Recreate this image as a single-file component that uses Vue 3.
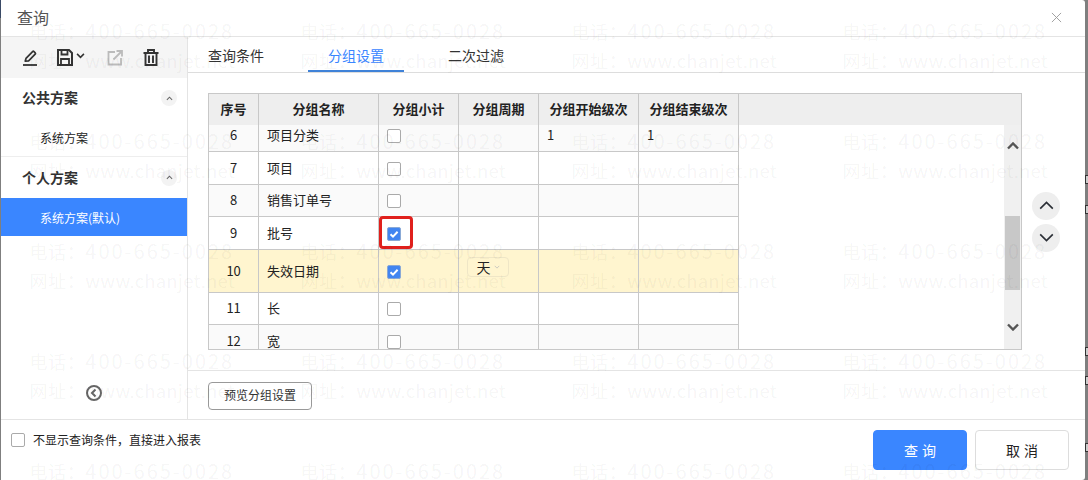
<script setup>
const rows = [
  { no: 6, name: '项目分类', h: 32, alt: true, start: '1', end: '1' },
  { no: 7, name: '项目', h: 33 },
  { no: 8, name: '销售订单号', h: 32, alt: true },
  { no: 9, name: '批号', h: 33, checked: true, mark: true },
  { no: 10, name: '失效日期', h: 43, checked: true, hot: true, period: '天' },
  { no: 11, name: '长', h: 32 },
  { no: 12, name: '宽', h: 32, alt: true },
]
const heads = ['序号', '分组名称', '分组小计', '分组周期', '分组开始级次', '分组结束级次']
const tabs = ['查询条件', '分组设置', '二次过滤']
const marks = [175, 205, 347, 376, 443]
const waterCells = Array.from({ length: 20 }, (_, i) => i)
const telLabel = '电话\uFF1A'
const webLabel = '网址\uFF1A'
const skipText = '不显示查询条件\uFF0C直接进入报表'
</script>

<template>
  <div class="stage">
    <div class="modal">
      <header class="head">
        <span class="title">查询</span>
        <svg class="close" viewBox="0 0 12 12" width="11" height="11"><path d="M1 1l10 10M11 1L1 11" fill="none" stroke="#999" stroke-width="1" /></svg>
      </header>

      <div class="body">
        <aside class="side">
          <div class="tools">
            <svg class="tool t-edit" viewBox="0 0 16 18" width="16" height="18">
              <path d="M3.2 12.2 4 9.4 10.6 2.6a1 1 0 0 1 1.4 0l1.2 1.2a1 1 0 0 1 0 1.4L6.6 11.8Z" fill="none" stroke="#333" stroke-width="1.7" stroke-linejoin="round" />
              <path d="M1 16h14" stroke="#333" stroke-width="1.8" />
            </svg>
            <span class="save">
              <svg viewBox="0 0 16 17" width="16" height="17">
                <path d="M1 1h11l3 3v12H1Z" fill="none" stroke="#333" stroke-width="2" />
                <path d="M4.5 1.5v4h6v-4M4 16v-6h8v6" fill="none" stroke="#333" stroke-width="1.8" />
              </svg>
              <svg viewBox="0 0 10 7" width="9" height="6"><path d="M1 1l4 4 4-4" fill="none" stroke="#333" stroke-width="1.8" /></svg>
            </span>
            <svg class="tool t-export" viewBox="0 0 16 16" width="16" height="16">
              <path d="M8 2H1.5v12.5H14V8" fill="none" stroke="#bbb" stroke-width="1.8" />
              <path d="M6.5 9.5 14.5 1.5M9.5 1h5.5v5.5" fill="none" stroke="#bbb" stroke-width="1.8" />
            </svg>
            <svg class="tool t-trash" viewBox="0 0 16 17" width="16" height="17">
              <path d="M0.5 4h15M5 4V1h6v3" fill="none" stroke="#333" stroke-width="1.9" />
              <path d="M2.5 4v12h11V4M6 6.5V14M10 6.5V14" fill="none" stroke="#333" stroke-width="1.9" />
            </svg>
          </div>

          <div class="group-head">
            <span>公共方案</span>
            <i class="fold"><svg viewBox="0 0 8 5" width="7" height="5"><path d="M1 4l3-3 3 3" fill="none" stroke="#666" stroke-width="1.2" /></svg></i>
          </div>
          <div class="plan">系统方案</div>
          <div class="group-head second">
            <span>个人方案</span>
            <i class="fold"><svg viewBox="0 0 8 5" width="7" height="5"><path d="M1 4l3-3 3 3" fill="none" stroke="#666" stroke-width="1.2" /></svg></i>
          </div>
          <div class="plan active">系统方案(默认)</div>

          <svg class="collapse" viewBox="0 0 16 16" width="16" height="16">
            <circle cx="8" cy="8" r="7" fill="none" stroke="#666" stroke-width="2" />
            <path d="M9.5 4.5 6 8l3.5 3.5" fill="none" stroke="#666" stroke-width="2" />
          </svg>
        </aside>

        <main class="main">
          <nav class="tabs">
            <span v-for="(t, i) in tabs" :key="t" class="tab" :class="{ on: i === 1 }">{{ t }}</span>
          </nav>

          <div class="work">
            <div class="grid-box">
              <div class="grid-head">
                <span v-for="h in heads" :key="h" class="hcell">{{ h }}</span>
              </div>
              <div class="grid-view">
                <div class="grid-scroll">
                  <div
                    v-for="r in rows"
                    :key="r.no"
                    class="row"
                    :class="{ alt: r.alt, hot: r.hot }"
                    :style="{ height: r.h + 'px' }"
                  >
                    <span class="cell center">{{ r.no }}</span>
                    <span class="cell name">{{ r.name }}</span>
                    <span class="cell check-cell">
                      <i class="box" :class="{ checked: r.checked }">
                        <svg v-if="r.checked" viewBox="0 0 12 12" width="12" height="12"><path d="M2.5 6.2 5 8.6 9.6 3.8" fill="none" stroke="#fff" stroke-width="2" /></svg>
                      </i>
                      <b v-if="r.mark" class="redmark"></b>
                    </span>
                    <span class="cell period">
                      <span v-if="r.period" class="select">
                        {{ r.period }}
                        <svg viewBox="0 0 8 5" width="6" height="4"><path d="M1 1l3 3 3-3" fill="none" stroke="#bbb" stroke-width="1" /></svg>
                      </span>
                    </span>
                    <span class="cell num">{{ r.start }}</span>
                    <span class="cell num">{{ r.end }}</span>
                  </div>
                </div>
                <div class="scrollbar">
                  <svg viewBox="0 0 12 8" width="12" height="8"><path d="M1 6.5l5-5 5 5" fill="none" stroke="#555" stroke-width="2.4" /></svg>
                  <i class="thumb"></i>
                  <svg class="sb-down" viewBox="0 0 12 8" width="12" height="8"><path d="M1 1.5l5 5 5-5" fill="none" stroke="#555" stroke-width="2.4" /></svg>
                </div>
              </div>
            </div>
            <div class="movers">
              <button class="mover"><svg viewBox="0 0 16 10" width="15" height="9"><path d="M1 8.5l7-7 7 7" fill="none" stroke="#2b2f36" stroke-width="1.8" /></svg></button>
              <button class="mover"><svg viewBox="0 0 16 10" width="15" height="9"><path d="M1 1.5l7 7 7-7" fill="none" stroke="#2b2f36" stroke-width="1.8" /></svg></button>
            </div>
          </div>

          <div class="preview-bar">
            <button class="preview">预览分组设置</button>
          </div>
        </main>
      </div>

      <footer class="foot">
        <label class="skip"><i class="box"></i><span class="skip-text">{{ skipText }}</span></label>
        <div class="actions">
          <button class="btn primary">查询</button>
          <button class="btn">取消</button>
        </div>
      </footer>
    </div>

    <div class="watermark">
      <div v-for="c in waterCells" :key="c" class="wm">
        <span class="tel"><em>{{ telLabel }}</em>400-665-0028</span>
        <span class="web"><em>{{ webLabel }}</em>www.chanjet.net</span>
      </div>
    </div>

    <i v-for="m in marks" :key="m" class="edge-mark" :style="{ top: m + 'px' }"></i>
  </div>
</template>

<style>
html, body { margin: 0; background: #7f7f7f; }
</style>

<style scoped>
.stage {
  position: relative;
  width: 1088px;
  height: 480px;
  overflow: hidden;
  background: linear-gradient(#3a4a66 18px, transparent 18px) 0 0 / 1px 100% no-repeat, #7f7f7f;
  font-family: "Noto Sans CJK SC", "Noto Sans", sans-serif;
  color: #222;
}
.modal {
  margin-left: 1px;
  width: 1084px;
  height: 480px;
  background: #fff;
  border-radius: 0 3px 3px 0;
  display: flex;
  flex-direction: column;
}
.head {
  height: 36px;
  flex: none;
  border-bottom: 1px solid #e4e4e4;
  display: flex;
  align-items: center;
  justify-content: space-between;
  padding: 0 23px 0 16px;
}
.title { font-size: 16px; color: #555; line-height: 36px; margin-top: -2px; }
.close { display: block; margin-top: -1px; }

.body { flex: none; height: 382px; display: flex; }
.side {
  width: 186px;
  flex: none;
  border-right: 1px solid #e4e4e4;
  display: flex;
  flex-direction: column;
}
.tools {
  height: 41px;
  background: #f5f5f5;
  display: flex;
  align-items: center;
  padding-left: 21px;
  flex: none;
}
.tool, .save svg { display: block; }
.t-edit { margin-right: 19px; }
.save { display: flex; align-items: center; gap: 3px; margin-right: 22px; }
.save svg + svg { margin-top: -3px; }
.t-export { margin-right: 20px; }

.group-head {
  height: 40px;
  flex: none;
  box-sizing: border-box;
  display: flex;
  align-items: center;
  justify-content: space-between;
  padding: 0 10px 0 21px;
  font-size: 14px;
  font-weight: 700;
  color: #333;
}
.group-head span { margin-top: -2px; }
.group-head.second { height: 42px; border-top: 1px solid #eee; }
.fold {
  width: 16px;
  height: 16px;
  border-radius: 50%;
  background: #f3f3f3;
  display: flex;
  align-items: center;
  justify-content: center;
}
.plan {
  height: 38px;
  flex: none;
  line-height: 39px;
  padding-left: 39px;
  font-size: 12px;
  color: #222;
}
.plan.active { background: #3a86ff; color: #fff; }
.collapse { display: block; margin: auto 0 18px 85px; }

.main { flex: 1; min-width: 0; display: flex; flex-direction: column; }
.tabs {
  height: 35px;
  flex: none;
  border-bottom: 1px solid #ddd;
  display: flex;
  gap: 24px;
}
.tab {
  width: 96px;
  text-align: center;
  font-size: 14px;
  line-height: 36px;
  height: 35px;
  box-sizing: border-box;
  color: #333;
}
.tab.on { color: #3a86ff; border-bottom: 2px solid #3f82d8; }

.work {
  flex: none;
  height: 297px;
  box-sizing: border-box;
  padding: 20px 0 20px 20px;
  display: flex;
  align-items: center;
  gap: 10px;
}
.grid-box {
  width: 812px;
  height: 255px;
  border: 1px solid #c8c8c8;
  flex: none;
  display: flex;
  flex-direction: column;
}
.grid-head {
  height: 31px;
  flex: none;
  background: #eee;
  display: flex;
}
.hcell {
  font-size: 13px;
  font-weight: 700;
  line-height: 30px;
  text-align: center;
  color: #222;
  box-sizing: border-box;
  border-right: 1px solid #c8c8c8;
  flex: none;
}
.hcell:nth-child(1), .cell:nth-child(1) { width: 50px; }
.hcell:nth-child(2), .cell:nth-child(2) { width: 120px; }
.hcell:nth-child(3), .cell:nth-child(3) { width: 80px; }
.hcell:nth-child(4), .cell:nth-child(4) { width: 80px; }
.hcell:nth-child(5), .cell:nth-child(5) { width: 100px; }
.hcell:nth-child(6), .cell:nth-child(6) { width: 100px; }

.grid-view { flex: 1; min-height: 0; display: flex; }
.grid-scroll { flex: 1; min-width: 0; overflow: hidden; }
.row {
  display: flex;
  box-sizing: border-box;
  border-bottom: 1px solid #c8c8c8;
  width: 530px;
  font-size: 13px;
}
.row:first-child { margin-top: -5px; }
.row:last-child { border-bottom: 0; }
.row.alt { background: #fafafa; }
.row.hot { background: #fff5cf; }
.cell {
  flex: none;
  box-sizing: border-box;
  border-right: 1px solid #c8c8c8;
  display: flex;
  align-items: center;
  color: #222;
  position: relative;
  padding-bottom: 2px;
}
.center { justify-content: center; font-size: 13px; letter-spacing: -0.3px; }
.name { padding-left: 8px; }
.num { padding-left: 8px; font-size: 13px; }
.check-cell { padding: 1px 0 0 8px; }
.period { align-items: flex-start; padding: 7px 0 0 8px; }
.select {
  width: 42px;
  height: 20px;
  box-sizing: border-box;
  border: 1px solid #efe6c6;
  border-radius: 4px;
  display: flex;
  align-items: center;
  justify-content: center;
  gap: 3px;
  font-size: 14px;
  line-height: 18px;
}
.box {
  width: 14px;
  height: 14px;
  box-sizing: border-box;
  flex: none;
  border: 1px solid #aaa;
  border-radius: 2px;
  background: #fff;
  display: flex;
  align-items: center;
  justify-content: center;
}
.box.checked { background: #4285f0; border-color: #8aa9d6; }
.redmark {
  position: absolute;
  left: 0;
  top: -1px;
  width: 34px;
  height: 33px;
  box-sizing: border-box;
  border: 3px solid #e0201c;
  border-radius: 4px;
}
.scrollbar {
  width: 17px;
  flex: none;
  background: #f0f0f0;
  position: relative;
  display: flex;
  flex-direction: column;
  align-items: center;
  padding-top: 17px;
  box-sizing: border-box;
}
.sb-down { margin-top: 173px; }
.thumb {
  position: absolute;
  left: 1px;
  top: 91px;
  width: 15px;
  height: 74px;
  background: #c8c8c8;
}
.movers { display: flex; flex-direction: column; gap: 4px; }
.mover {
  width: 28px;
  height: 28px;
  padding: 0;
  border: 0;
  border-radius: 50%;
  background: #eee;
  display: flex;
  align-items: center;
  justify-content: center;
}
.preview-bar {
  flex: 1;
  border-top: 1px solid #e4e4e4;
  padding: 10px 0 0 20px;
}
.preview {
  width: 104px;
  height: 28px;
  padding: 0 0 2px;
  background: #fff;
  border: 1px solid #999;
  border-radius: 4px;
  font: 12px "Noto Sans CJK SC", sans-serif;
  color: #333;
}
.foot {
  flex: 1;
  border-top: 1px solid #e4e4e4;
  display: flex;
  justify-content: space-between;
  padding: 10px 16px 0 10px;
}
.skip {
  display: flex;
  align-items: center;
  gap: 8px;
  height: 20px;
  font-size: 12px;
  color: #222;
}
.skip-text { margin-top: -2px; }
.actions { display: flex; gap: 8px; }
.btn {
  width: 94px;
  height: 40px;
  padding: 0;
  background: #fff;
  border: 1px solid #ddd;
  border-radius: 4px;
  font: 14px "Noto Sans CJK SC", sans-serif;
  letter-spacing: 4px;
  text-indent: 4px;
  color: #222;
}
.btn.primary { background: #3a86ff; border-color: #3a86ff; color: #fff; }

.watermark {
  position: absolute;
  left: 29.5px;
  top: 16px;
  display: grid;
  grid-template-columns: repeat(4, 271px);
  grid-auto-rows: 110px;
  pointer-events: none;
}
.wm {
  display: flex;
  flex-direction: column;
  font-size: 20px;
  line-height: 29px;
  color: rgba(0, 0, 0, 0.05);
  white-space: nowrap;
  font-family: "Noto Sans CJK SC", sans-serif;
}
.tel { letter-spacing: 2px; }
.web { font-size: 18.5px; letter-spacing: 0.2px; }
.wm em {
  font-style: normal;
  font-size: 18px;
  letter-spacing: 0.6px;
}
.edge-mark {
  position: absolute;
  left: 1085px;
  width: 3px;
  height: 9px;
  box-sizing: border-box;
  border: 1px solid #333;
  border-right: 0;
  background: #ccc;
}
</style>
